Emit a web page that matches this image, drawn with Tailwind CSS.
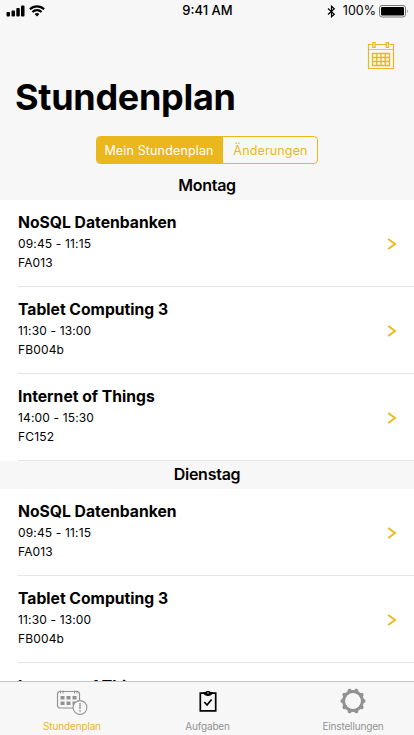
<!DOCTYPE html>
<html lang="de">
<head>
<meta charset="utf-8">
<title>Stundenplan</title>
<script src="https://cdn.jsdelivr.net/npm/@tailwindcss/browser@4"></script>
</head>
<body class="bg-white">
<div class="flex h-[735px] w-[414px] flex-col overflow-hidden bg-white font-['Inter',sans-serif] text-black">
  <header class="flex h-[172px] shrink-0 flex-col bg-[#f7f7f7]">
    <div class="grid h-[22px] grid-cols-3 items-center pr-[5px] pl-[6px]">
      <div class="flex items-center gap-[4px]">
        <svg width="19" height="12" viewBox="0 0 19 12"><rect x="0.5" y="7" width="3.5" height="4.5" rx="1"/><rect x="5.5" y="5.5" width="3.5" height="6" rx="1"/><rect x="10.3" y="3" width="3.5" height="8.5" rx="1"/><rect x="15" y="0.5" width="3.5" height="11" rx="1"/></svg>
        <svg width="16" height="12" viewBox="0 0 16 12" fill="none" stroke="#000" stroke-width="2.1"><path d="M0.9 4.3A10.2 10.2 0 0 1 15.1 4.3"/><path d="M3.4 7A6.5 6.5 0 0 1 12.6 7"/><path d="M5.6 9.1A3.5 3.5 0 0 1 10.4 9.1L8 11.5z" fill="#000" stroke="none"/></svg>
      </div>
      <div class="text-center text-[13px] font-medium whitespace-nowrap">9:41 AM</div>
      <div class="flex items-center justify-end whitespace-nowrap">
        <svg class="mr-[7px]" width="9" height="13" viewBox="0 0 9 13" fill="none" stroke="#000" stroke-width="1.2"><path d="M1 3.5L7.3 9.2L4.5 11.8V1.2L7.3 3.8L1 9.5"/></svg>
        <span class="mr-[3px] text-[12.5px]">100%</span>
        <svg width="30" height="13" viewBox="0 0 30 13"><rect x="0.5" y="0.5" width="26" height="11.5" rx="2.5" fill="none" stroke="#777"/><rect x="2" y="2" width="23" height="8.5" rx="1.2"/><path d="M28 4.2q1.8 2 0 4z" fill="#777"/></svg>
      </div>
    </div>
    <div class="flex h-[48px] justify-end pt-[20px] pr-[19px]">
      <svg width="28" height="28" viewBox="0 0 28 28" fill="none" stroke="#eab71c"><path d="M5.5 2.5H1.5V26.5H26.5V2.5H22.5M8.5 2.5H19.5" stroke-width="1.2"/><path d="M1.5 7.5H26.5" stroke-opacity=".75"/><rect x="5.9" y="0.6" width="2.2" height="4.8" stroke-width="1.2"/><rect x="19.2" y="0.6" width="2.2" height="4.8" stroke-width="1.2"/><path d="M5.5 11.5H22.5V23.5H5.5zM9.8 11V24M14 11V24M18.2 11V24M5 15.5H23M5 19.5H23" stroke-width="1.3"/></svg>
    </div>
    <h1 class="h-[66px] pt-[4px] pl-[15px] text-[36px] leading-[46px] font-bold tracking-[-0.3px]">Stundenplan</h1>
    <div class="mx-auto flex h-[28px] w-[222px] overflow-hidden rounded-[4px] border border-[#eab71c] text-[12.5px] leading-[27px]">
      <div class="w-[126px] bg-[#eab71c] pr-[2px] text-center tracking-[0.15px] text-white">Mein Stundenplan</div>
      <div class="flex-1 pl-[1px] text-center tracking-[0.15px] text-[#eab71c]">Änderungen</div>
    </div>
  </header>
  <main class="min-h-0 flex-1 overflow-hidden">
    <h2 class="h-[28px] bg-[#f7f7f7] text-center text-[16px] leading-[27px] font-semibold tracking-[-0.25px]">Montag</h2>
    <ul>
      <li class="ml-[18px] flex h-[87px] border-b border-[#e4e4e4] pt-[11px] pr-[17px]">
        <div class="flex-1"><h3 class="text-[15.7px] leading-[23px] font-bold">NoSQL Datenbanken</h3><p class="text-[12px] leading-[19px] tracking-[0.15px]">09:45 - 11:15</p><p class="text-[12px] leading-[19px] tracking-[0.15px]">FA013</p></div>
        <svg class="mt-[26px]" width="10" height="14" viewBox="0 0 10 14" fill="none" stroke="#eab71c" stroke-width="1.9"><path d="M1.2 2L8 7L1.2 12"/></svg>
      </li>
      <li class="ml-[18px] flex h-[87px] border-b border-[#e4e4e4] pt-[11px] pr-[17px]">
        <div class="flex-1"><h3 class="text-[15.7px] leading-[23px] font-bold">Tablet Computing 3</h3><p class="text-[12px] leading-[19px] tracking-[0.15px]">11:30 - 13:00</p><p class="text-[12px] leading-[19px] tracking-[0.15px]">FB004b</p></div>
        <svg class="mt-[26px]" width="10" height="14" viewBox="0 0 10 14" fill="none" stroke="#eab71c" stroke-width="1.9"><path d="M1.2 2L8 7L1.2 12"/></svg>
      </li>
      <li class="ml-[18px] flex h-[87px] border-b border-[#e4e4e4] pt-[11px] pr-[17px]">
        <div class="flex-1"><h3 class="text-[15.7px] leading-[23px] font-bold">Internet of Things</h3><p class="text-[12px] leading-[19px] tracking-[0.15px]">14:00 - 15:30</p><p class="text-[12px] leading-[19px] tracking-[0.15px]">FC152</p></div>
        <svg class="mt-[26px]" width="10" height="14" viewBox="0 0 10 14" fill="none" stroke="#eab71c" stroke-width="1.9"><path d="M1.2 2L8 7L1.2 12"/></svg>
      </li>
    </ul>
    <h2 class="h-[28px] bg-[#f7f7f7] text-center text-[16px] leading-[27px] font-semibold tracking-[-0.25px]">Dienstag</h2>
    <ul>
      <li class="ml-[18px] flex h-[87px] border-b border-[#e4e4e4] pt-[11px] pr-[17px]">
        <div class="flex-1"><h3 class="text-[15.7px] leading-[23px] font-bold">NoSQL Datenbanken</h3><p class="text-[12px] leading-[19px] tracking-[0.15px]">09:45 - 11:15</p><p class="text-[12px] leading-[19px] tracking-[0.15px]">FA013</p></div>
        <svg class="mt-[26px]" width="10" height="14" viewBox="0 0 10 14" fill="none" stroke="#eab71c" stroke-width="1.9"><path d="M1.2 2L8 7L1.2 12"/></svg>
      </li>
      <li class="ml-[18px] flex h-[87px] border-b border-[#e4e4e4] pt-[11px] pr-[17px]">
        <div class="flex-1"><h3 class="text-[15.7px] leading-[23px] font-bold">Tablet Computing 3</h3><p class="text-[12px] leading-[19px] tracking-[0.15px]">11:30 - 13:00</p><p class="text-[12px] leading-[19px] tracking-[0.15px]">FB004b</p></div>
        <svg class="mt-[26px]" width="10" height="14" viewBox="0 0 10 14" fill="none" stroke="#eab71c" stroke-width="1.9"><path d="M1.2 2L8 7L1.2 12"/></svg>
      </li>
      <li class="ml-[18px] flex h-[87px] pt-[12px] pr-[17px]">
        <h3 class="text-[15.7px] leading-[23px] font-bold">Internet of Things</h3>
      </li>
    </ul>
  </main>
  <nav class="flex h-[54px] shrink-0 border-t border-[#c4c4c4] bg-[#f7f7f7] text-[10px] leading-[14px] tracking-[-0.15px] text-[#929292]">
    <a class="flex w-[144px] flex-col items-center text-[#eab71c]">
      <svg class="mt-[7px] mb-[4px] block" width="32" height="26" viewBox="0 0 32 26" fill="none" stroke="#929292"><path d="M17 19H4a2.500 2.500 0 0 1-2.500-2.500V5A2.500 2.500 0 0 1 4 2.500H21A2.500 2.500 0 0 1 23.500 5V11" stroke-width="1.2"/><path d="M4.500 1.500v3M7 1.500v3M18.500 1.500v3M21 1.500v3" stroke-width="1"/><path d="M4.500 7h4v3.500h-4zM10.500 7h4v3.500h-4zM16.500 7h4v3.500h-4zM4.500 12.500h4v3.500h-4zM10.500 12.500h4v3.500h-4zM16.500 12.500h4v3.500h-4z" fill="#929292" stroke="none"/><circle cx="24" cy="18.500" r="6.900" fill="#f7f7f7" stroke-width="1.1"/><path d="M24 14v6M24 21v1.700" stroke-width="1.300"/></svg>
      <span>Stundenplan</span>
    </a>
    <a class="flex w-[127px] flex-col items-center">
      <svg class="mt-[7px] mb-[4px] block" width="20" height="26" viewBox="0 0 20 26" fill="none" stroke="#000"><path d="M2.300 4.200H17.700V21.800H2.300z" stroke-width="1.700"/><path d="M5 3.200H7Q7.800 2 10 2T13 3.200H15Q14 7 10 7T5 3.200z" fill="#000" stroke="none"/><circle cx="10" cy="4" r=".7" fill="#f7f7f7" stroke="none"/><path d="M6.300 13L9 16L13.600 10.500" stroke-width="1.700"/></svg>
      <span>Aufgaben</span>
    </a>
    <a class="ml-[21px] flex w-[122px] flex-col items-center">
      <svg class="mt-[6px] mb-[5px] block" width="26" height="26" viewBox="-13 -13 26 26" fill="none" stroke="#929292"><circle r="9.300" stroke-width="3.200"/><g stroke-width="4" stroke-linecap="round"><path d="M3.100 -9.600L3.350 -10.300M8.200 -5.900L8.600 -6.200M10.100 0H10.600M8.200 5.900L8.600 6.200M3.100 9.600L3.350 10.300M-3.100 9.600L-3.350 10.300M-8.200 5.900L-8.600 6.200M-10.100 0H-10.600M-8.200 -5.900L-8.600 -6.200M-3.100 -9.600L-3.350 -10.300"/></g><circle r="7.700" fill="#f7f7f7" stroke="none"/></svg>
      <span>Einstellungen</span>
    </a>
  </nav>
</div>
</body>
</html>
